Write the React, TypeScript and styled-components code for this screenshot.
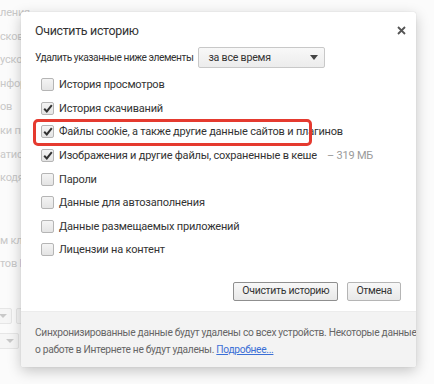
import { createGlobalStyle, styled } from "styled-components";

const GlobalStyle = createGlobalStyle`
  html, body {
    margin: 0;
    padding: 0;
    background: #fbfbfb;
  }
  #root {
    width: 434px;
    height: 384px;
  }
`;

const font = `Roboto, "Noto Sans", sans-serif`;

const Screen = styled.div`
  position: relative;
  width: 434px;
  height: 384px;
  overflow: hidden;
  background: #fbfbfb;
  font-family: ${font};
  letter-spacing: -0.2px;
`;

const Settings = styled.div`
  display: flex;
  flex-direction: column;
  padding-top: 5px;
  width: 21px;
`;

const SettingLine = styled.div<{ $gapBefore?: number }>`
  display: flex;
  height: 23.6px;
  line-height: 16px;
  margin-top: ${(p) => p.$gapBefore ?? 0}px;
  font-size: 11px;
  color: #c8c8c8;
  white-space: nowrap;
  span {
    color: #a9c3e3;
  }
`;

const SelectsRow = styled.div<{ $shift: number; $top: number }>`
  display: flex;
  margin-left: ${(p) => p.$shift}px;
  margin-top: ${(p) => p.$top}px;
  gap: 4px;
  height: 16px;
`;

const GhostSelect = styled.div`
  flex: 0 0 auto;
  width: 40px;
  height: 16px;
  border: 1px solid #e6e6e6;
  border-radius: 2px;
  background: #f6f6f6;
  display: flex;
  align-items: center;
  justify-content: flex-end;
  padding-right: 4px;
  box-sizing: border-box;
  &::after {
    content: "";
    border-left: 4px solid transparent;
    border-right: 4px solid transparent;
    border-top: 4px solid #c9c9c9;
  }
`;

const Dialog = styled.div`
  position: absolute;
  left: 21px;
  top: 12px;
  width: 395px;
  height: 355px;
  background: #fff;
  border-radius: 2px;
  box-shadow: 0 4px 14px rgba(0, 0, 0, 0.22), 0 0 1px rgba(0, 0, 0, 0.2);
  display: flex;
  flex-direction: column;
  overflow: hidden;
`;

const Header = styled.div`
  display: flex;
  justify-content: space-between;
  align-items: flex-start;
  padding: 10px 8px 0 14px;
  height: 32px;
  box-sizing: border-box;
`;

const Title = styled.h1`
  margin: 0;
  font-size: 12.4px;
  font-weight: 400;
  letter-spacing: -0.3px;
  line-height: 17px;
  color: #333;
`;

const CloseButton = styled.button`
  border: 0;
  background: none;
  padding: 0;
  margin-top: 1px;
  width: 14px;
  height: 14px;
  display: flex;
  align-items: center;
  justify-content: center;
  cursor: pointer;
`;

const Body = styled.div`
  display: flex;
  flex-direction: column;
  padding: 0 14px;
  flex: 1;
`;

const RangeRow = styled.div`
  display: flex;
  align-items: center;
  gap: 5px;
  height: 26px;
  font-size: 10.2px;
  letter-spacing: -0.45px;
  color: #333;
`;

const Select = styled.div`
  display: flex;
  align-items: center;
  justify-content: space-between;
  box-sizing: border-box;
  width: 127px;
  height: 21px;
  padding: 0 6px 0 9px;
  border: 1px solid #c8c8c8;
  border-radius: 2px;
  background: linear-gradient(#f8f8f8, #ececec);
  font-size: 10.6px;
  letter-spacing: -0.2px;
  color: #333;
  &::after {
    content: "";
    border-left: 4.5px solid transparent;
    border-right: 4.5px solid transparent;
    border-top: 5px solid #444;
  }
`;

const Options = styled.div`
  display: flex;
  flex-direction: column;
  padding-top: 3px;
`;

const Option = styled.label<{ $highlight?: boolean }>`
  position: relative;
  display: flex;
  align-items: center;
  gap: 5px;
  height: 23.6px;
  padding-left: 6px;
  font-size: 11px;
  color: #333;
  white-space: nowrap;
  &::before {
    content: "";
    display: ${(p) => (p.$highlight ? "block" : "none")};
    position: absolute;
    left: -2px;
    top: -1px;
    width: 279px;
    height: 27px;
    box-sizing: border-box;
    border: 3px solid #e53a2f;
    border-radius: 5px;
  }
`;

const Box = styled.span`
  flex: 0 0 auto;
  width: 13px;
  height: 13px;
  box-sizing: border-box;
  border: 1px solid #b5b5b5;
  border-radius: 2px;
  background: linear-gradient(#f4f4f4, #e4e4e4);
  display: flex;
  align-items: center;
  justify-content: center;
`;

const Size = styled.span`
  color: #9a9a9a;
  margin-left: 5px;
`;

const Actions = styled.div`
  display: flex;
  justify-content: flex-end;
  gap: 9px;
  padding: 20px 1px 0 0;
`;

const Button = styled.button<{ $default?: boolean }>`
  height: 19px;
  padding: 0 8px;
  border: 1px solid ${(p) => (p.$default ? "#8f8f8f" : "#b5b5b5")};
  border-radius: 2px;
  background: linear-gradient(#f8f8f8, #e8e8e8);
  font-family: ${font};
  font-size: 10.5px;
  letter-spacing: -0.3px;
  color: #333;
  line-height: 16px;
  cursor: pointer;
`;

const Footer = styled.div`
  height: 56px;
  box-sizing: border-box;
  padding: 12px 8px 0 14px;
  background: #f3f3f3;
  border-top: 1px solid #ececec;
  font-size: 10.2px;
  letter-spacing: -0.3px;
  line-height: 17px;
  color: #666;
  white-space: nowrap;
  a {
    color: #3b6fd6;
    text-decoration: underline;
  }
`;

const Check = () => (
  <svg width="10" height="9" viewBox="0 0 10 9">
    <path d="M1.2 4.8 L3.8 7.4 L8.8 1.2" fill="none" stroke="#333" strokeWidth="2" />
  </svg>
);

const options = [
  { label: "История просмотров", checked: false },
  { label: "История скачиваний", checked: true },
  { label: "Файлы cookie, а также другие данные сайтов и плагинов", checked: true, highlight: true },
  { label: "Изображения и другие файлы, сохраненные в кеше", checked: true, size: "–  319 МБ" },
  { label: "Пароли", checked: false },
  { label: "Данные для автозаполнения", checked: false },
  { label: "Данные размещаемых приложений", checked: false },
  { label: "Лицензии на контент", checked: false },
];

const backgroundLines = ["ления", "сковы", "ускор", "нфор", "ов", "ки пр", "атис", "кодя"];

function App() {
  return (
    <Screen>
      <GlobalStyle />
      <Settings>
        {backgroundLines.map((t) => (
          <SettingLine key={t}>{t}</SettingLine>
        ))}
        <SettingLine $gapBefore={39}>м кл</SettingLine>
        <SettingLine>
          тов&nbsp;<span>Н</span>
        </SettingLine>
        <SelectsRow $shift={-28} $top={28}>
          <GhostSelect />
          <GhostSelect />
        </SelectsRow>
        <SelectsRow $shift={-21} $top={9}>
          <GhostSelect />
        </SelectsRow>
      </Settings>

      <Dialog>
        <Header>
          <Title>Очистить историю</Title>
          <CloseButton aria-label="Закрыть">
            <svg width="9" height="9" viewBox="0 0 9 9">
              <path d="M1 1 L8 8 M8 1 L1 8" stroke="#555" strokeWidth="1.8" />
            </svg>
          </CloseButton>
        </Header>
        <Body>
          <RangeRow>
            Удалить указанные ниже элементы
            <Select>за все время</Select>
          </RangeRow>
          <Options>
            {options.map((o) => (
              <Option key={o.label} $highlight={o.highlight}>
                <Box>{o.checked && <Check />}</Box>
                {o.label}
                {o.size && <Size>{o.size}</Size>}
              </Option>
            ))}
          </Options>
          <Actions>
            <Button $default>Очистить историю</Button>
            <Button>Отмена</Button>
          </Actions>
        </Body>
        <Footer>
          Синхронизированные данные будут удалены со всех устройств. Некоторые данные
          <br />о работе в Интернете не будут удалены. <a href="#">Подробнее...</a>
        </Footer>
      </Dialog>
    </Screen>
  );
}

export default App;
